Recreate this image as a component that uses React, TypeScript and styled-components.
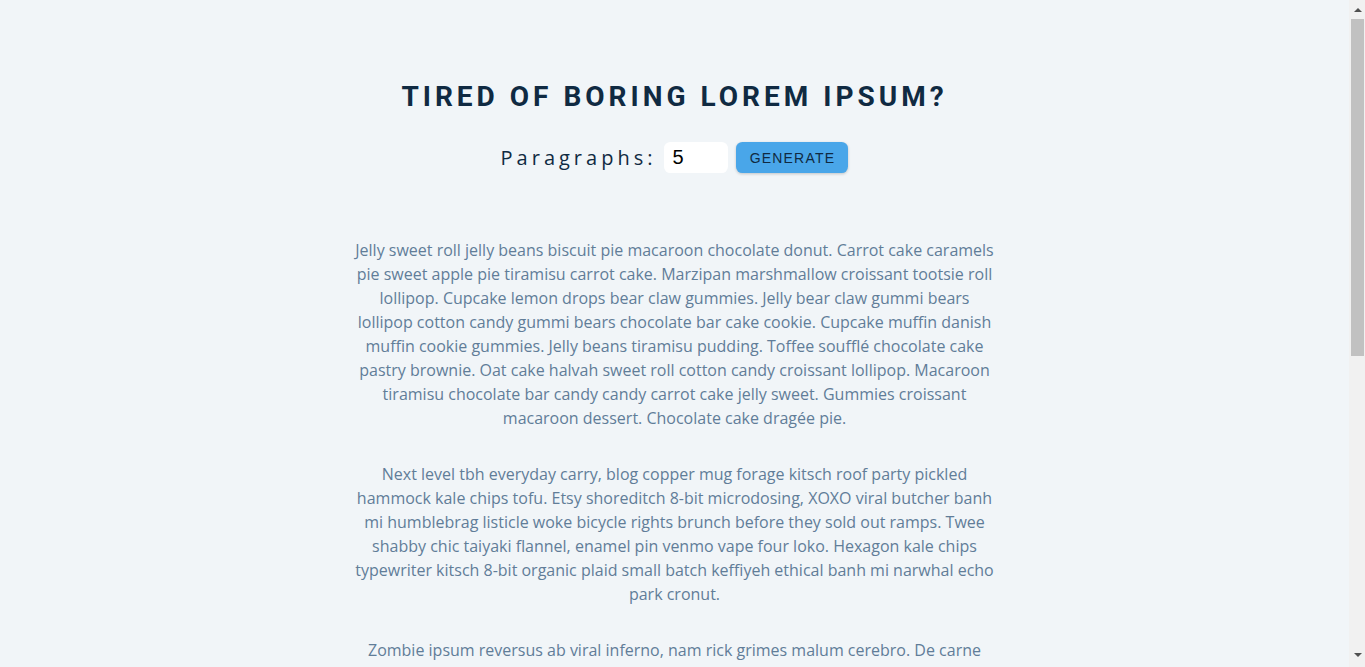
import React, { useState } from 'react'
import styled, { createGlobalStyle } from 'styled-components'

const text: string[] = [
  'Jelly sweet roll jelly beans biscuit pie macaroon chocolate donut. Carrot cake caramels pie sweet apple pie tiramisu carrot cake. Marzipan marshmallow croissant tootsie roll lollipop. Cupcake lemon drops bear claw gummies. Jelly bear claw gummi bears lollipop cotton candy gummi bears chocolate bar cake cookie. Cupcake muffin danish muffin cookie gummies. Jelly beans tiramisu pudding. Toffee soufflé chocolate cake pastry brownie. Oat cake halvah sweet roll cotton candy croissant lollipop. Macaroon tiramisu chocolate bar candy candy carrot cake jelly sweet. Gummies croissant macaroon dessert. Chocolate cake dragée pie.',
  'Next level tbh everyday carry, blog copper mug forage kitsch roof party pickled hammock kale chips tofu. Etsy shoreditch 8-bit microdosing, XOXO viral butcher banh mi humblebrag listicle woke bicycle rights brunch before they sold out ramps. Twee shabby chic taiyaki flannel, enamel pin venmo vape four loko. Hexagon kale chips typewriter kitsch 8-bit organic plaid small batch keffiyeh ethical banh mi narwhal echo park cronut.',
  'Zombie ipsum reversus ab viral inferno, nam rick grimes malum cerebro. De carne lumbering animata corpora quaeritis. Summus brains sit, morbo vel maleficia? De apocalypsi gorger omero undead survivor dictum mauris. Hi mindless mortuis soulless creaturas, imo evil stalking monstra adventus resi dentevil vultus comedat cerebella viventium. Qui animated corpse, cricket bat max brucks terribilem incessu zomby.',
  'Cat ipsum dolor sit amet, hiss at vacuum cleaner milk the cow lay on arms while you\'re using the keyboard sleep in the bathroom sink. Chase mice attack the dog then pretend like nothing happened. Chew on cable lick arm hair so stare at ceiling, for throwup on your pillow. Knock dish off table head butt cant eat out of my own dish.',
  'Bacon ipsum dolor amet pork belly tri-tip turducken, pancetta bresaola pork chicken meatloaf. Flank sirloin strip steak prosciutto kevin turducken. Ground round meatball short loin pork chop, tenderloin beef ribs frankfurter pancetta shoulder.',
]

const GlobalStyle = createGlobalStyle`
  * {
    margin: 0;
    padding: 0;
    box-sizing: border-box;
  }
  body {
    background: #f1f5f8;
    color: #102a42;
    font-family: 'Open Sans', 'Liberation Sans', sans-serif;
    font-size: 16px;
    line-height: 1.5;
    overflow: hidden;
  }
`

const Page = styled.div`
  display: flex;
  height: 100vh;
`

const Main = styled.main`
  flex: 1;
  overflow: hidden;
`

const Rail = styled.div`
  width: 16px;
  flex-shrink: 0;
  display: flex;
  flex-direction: column;
  background: #f1f1f1;
`

const Arrow = styled.div<{ $down?: boolean }>`
  height: ${(p) => (p.$down ? '20px' : '19px')};
  display: flex;
  justify-content: center;
  align-items: ${(p) => (p.$down ? 'flex-start' : 'center')};
  padding-top: ${(p) => (p.$down ? '6px' : '0')};
  padding-left: 1px;
`

const Thumb = styled.div`
  width: 13px;
  height: 337px;
  margin-left: 2px;
  background: #c1c1c1;
`

const Track = styled.div`
  flex: 1;
`

const Section = styled.section`
  width: 90vw;
  max-width: 40rem;
  margin: 0 auto;
  padding-top: 79px;
  text-align: center;
`

const Title = styled.h3`
  font-family: Roboto, 'Liberation Sans', sans-serif;
  font-size: 1.75rem;
  font-weight: 700;
  line-height: 1.25;
  letter-spacing: 0.25rem;
  text-transform: uppercase;
  color: #102a42;
`

const Form = styled.form`
  display: flex;
  justify-content: center;
  align-items: center;
  margin-top: 28px;
  margin-bottom: 4rem;
  letter-spacing: 0.25rem;
  text-transform: capitalize;
`

const Label = styled.label`
  font-size: 1.25rem;
  color: #102a42;
  line-height: 1.5;
`

const NumberInput = styled.input`
  width: 4rem;
  height: 31px;
  margin: 0 0.5rem;
  padding: 0.25rem 0.5rem;
  border: none;
  border-radius: 0.4rem;
  background: #fff;
  font-family: 'Liberation Sans', Arial, sans-serif;
  font-size: 1.25rem;
  letter-spacing: normal;
  color: #000;
  outline: none;
`

const Btn = styled.button`
  width: 112px;
  height: 31px;
  background: #49a6e9;
  color: #102a42;
  border: 2px solid transparent;
  border-radius: 0.4rem;
  box-shadow: 0 1px 3px rgba(0, 0, 0, 0.2);
  font-family: 'Liberation Sans', Arial, sans-serif;
  font-size: 0.875rem;
  letter-spacing: 0.075rem;
  text-transform: uppercase;
  cursor: pointer;
`

const Article = styled.article`
  padding-top: 1px;
`

const Para = styled.p`
  color: #617d98;
  margin-bottom: 2rem;
`

const App = () => {
  const [count, setCount] = useState<number>(5)

  const handleSubmit = (e: React.FormEvent<HTMLFormElement>): void => {
    e.preventDefault()
  }

  return (
    <>
      <GlobalStyle />
      <Page>
        <Main>
          <Section>
            <Title>tired of boring lorem ipsum?</Title>
            <Form onSubmit={handleSubmit}>
              <Label htmlFor="amount">paragraphs:</Label>
              <NumberInput
                type="number"
                id="amount"
                value={count}
                onChange={(e) => setCount(Number(e.target.value))}
              />
              <Btn type="submit">generate</Btn>
            </Form>
            <Article>
              {text.slice(0, count).map((item, i) => (
                <Para key={i}>{item}</Para>
              ))}
            </Article>
          </Section>
        </Main>
        <Rail>
          <Arrow>
            <svg width="8" height="4" viewBox="0 0 8 4">
              <path d="M0 4 L4 0 L8 4 Z" fill="#505050" />
            </svg>
          </Arrow>
          <Thumb />
          <Track />
          <Arrow $down>
            <svg width="8" height="4" viewBox="0 0 8 4">
              <path d="M0 0 L8 0 L4 4 Z" fill="#505050" />
            </svg>
          </Arrow>
        </Rail>
      </Page>
    </>
  )
}

export default App
